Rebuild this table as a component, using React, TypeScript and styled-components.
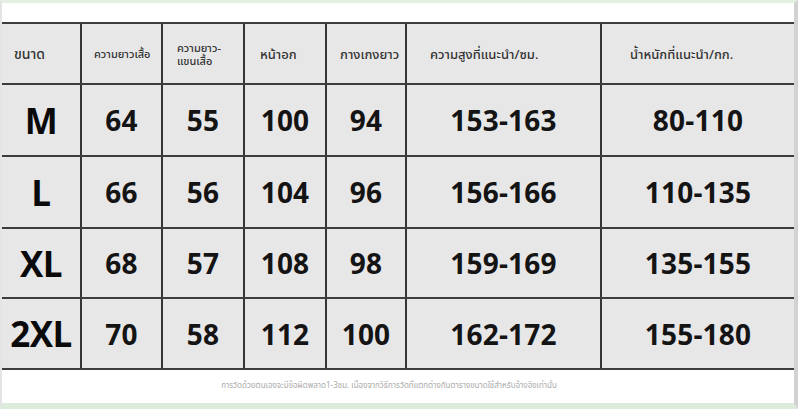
import React from "react";
import styled, { createGlobalStyle } from "styled-components";

const Global = createGlobalStyle`
  html, body { margin: 0; padding: 0; background: #ffffff; }
  body { width: 798px; height: 409px; overflow: hidden; }
  * { box-sizing: border-box; }
`;

const Frame = styled.div`
  width: 798px;
  height: 409px;
  background: #ffffff;
  border-top: 3px solid #e2efe1;
  border-bottom: 6px solid #dcebdc;
  border-left: 2px solid #e4e4e4;
  border-right: 4px solid #d2d2d2;
  display: flex;
  flex-direction: column;
  padding-top: 19px;
`;

const Table = styled.div`
  display: flex;
  flex-direction: column;
  border-top: 2px solid #3d3d3d;
`;

const Row = styled.div<{ $h: number }>`
  display: grid;
  grid-template-columns: 80px 81px 82px 82px 80px 195px 192px;
  height: ${(p) => p.$h}px;
  border-bottom: 2px solid #3d3d3d;
  background: #e8e7e8;
`;

const Cell = styled.div<{ $last?: boolean }>`
  display: flex;
  align-items: center;
  justify-content: center;
  border-right: ${(p) => (p.$last ? "none" : "2px solid #353535")};
  font-family: "Open Sans", "Noto Sans", sans-serif;
  font-weight: 700;
  font-size: 28px;
  color: #141414;
  letter-spacing: 0.2px;
`;

const SizeCell = styled(Cell)`
  font-size: 35px;
  color: #0a0a0a;
  letter-spacing: -0.5px;
`;

const HeadCell = styled.div<{ $pl: number; $fs: number; $last?: boolean }>`
  display: flex;
  align-items: center;
  justify-content: flex-start;
  padding-left: ${(p) => p.$pl}px;
  padding-top: 4px;
  border-right: ${(p) => (p.$last ? "none" : "2px solid #353535")};
  font-family: "Noto Sans Thai", "Noto Sans", "Open Sans", sans-serif;
  font-weight: 500;
  font-size: ${(p) => p.$fs}px;
  line-height: 1.15;
  color: #333333;
  white-space: pre-line;
`;

const Footer = styled.div`
  flex: 1;
  display: flex;
  align-items: center;
  justify-content: center;
  padding-bottom: 1px;
  padding-right: 18px;
  font-family: "Noto Sans Thai", "Noto Sans", sans-serif;
  font-size: 8px;
  color: #ababab;
`;

const headers: { t: string; pl: number; fs: number }[] = [
  { t: "ขนาด", pl: 12, fs: 14 },
  { t: "ความยาวเสื้อ", pl: 12, fs: 11 },
  { t: "ความยาว-\nแขนเสื้อ", pl: 14, fs: 11 },
  { t: "หน้าอก", pl: 15, fs: 13 },
  { t: "กางเกงยาว", pl: 13, fs: 13 },
  { t: "ความสูงที่แนะนำ/ซม.", pl: 23, fs: 13 },
  { t: "น้ำหนักที่แนะนำ/กก.", pl: 28, fs: 13 },
];

const rows: { h: number; v: string[] }[] = [
  { h: 72, v: ["M", "64", "55", "100", "94", "153-163", "80-110"] },
  { h: 72, v: ["L", "66", "56", "104", "96", "156-166", "110-135"] },
  { h: 70, v: ["XL", "68", "57", "108", "98", "159-169", "135-155"] },
  { h: 71, v: ["2XL", "70", "58", "112", "100", "162-172", "155-180"] },
];

export default function App() {
  return (
    <>
      <Global />
      <Frame>
        <Table>
          <Row $h={61}>
            {headers.map((h, i) => (
              <HeadCell key={i} $pl={h.pl} $fs={h.fs} $last={i === headers.length - 1}>
                {h.t}
              </HeadCell>
            ))}
          </Row>
          {rows.map((r, ri) => (
            <Row key={ri} $h={r.h}>
              {r.v.map((v, i) =>
                i === 0 ? (
                  <SizeCell key={i}>{v}</SizeCell>
                ) : (
                  <Cell key={i} $last={i === r.v.length - 1}>
                    {v}
                  </Cell>
                )
              )}
            </Row>
          ))}
        </Table>
        <Footer>
          การวัดด้วยตนเองจะมีข้อผิดพลาด1-3ซม. เนื่องจากวิธีการวัดที่แตกต่างกันตารางขนาดใช้สำหรับอ้างอิงเท่านั้น
        </Footer>
      </Frame>
    </>
  );
}
